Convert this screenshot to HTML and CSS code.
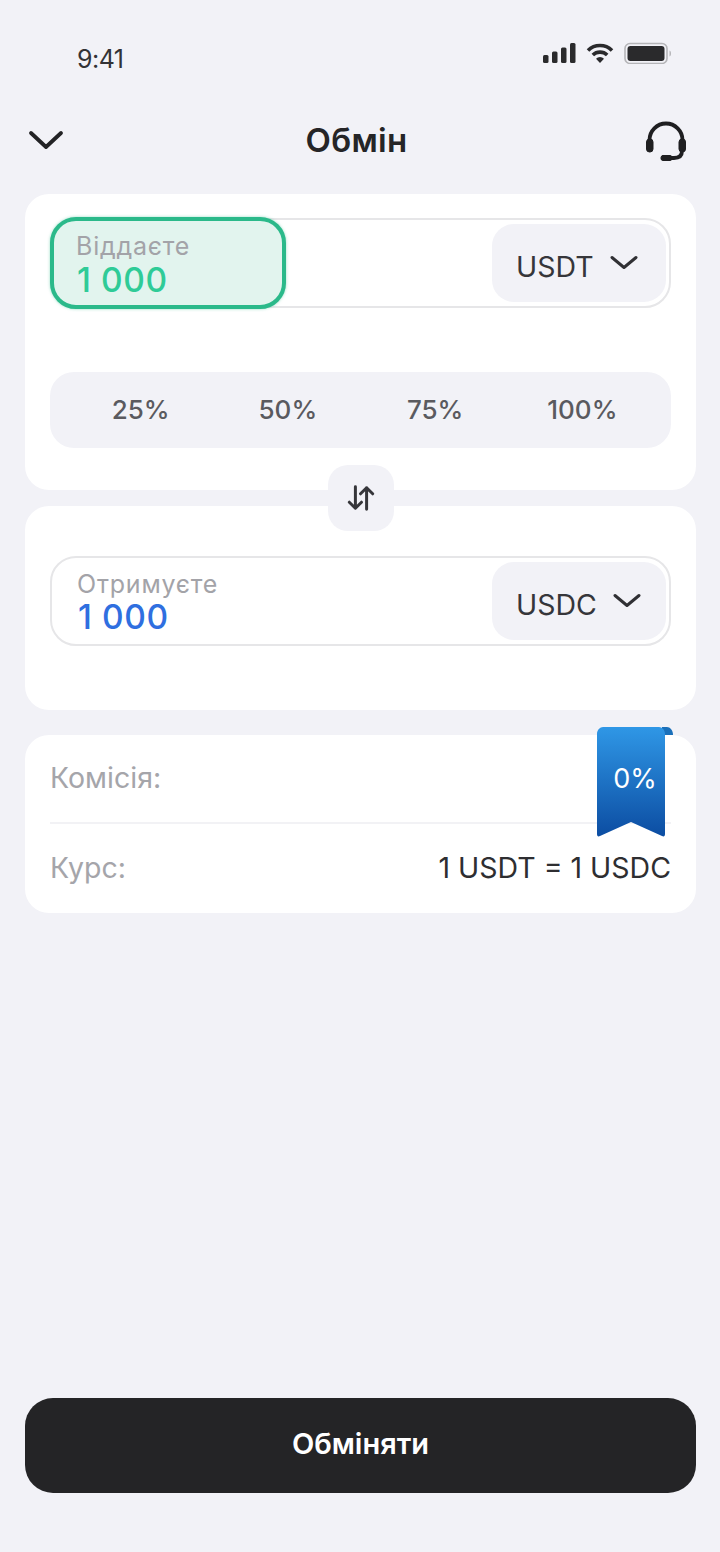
FILE: index.html
```html
<!DOCTYPE html>
<html lang="uk">
<head>
    <meta charset="UTF-8">
    <meta name="viewport" content="width=device-width, initial-scale=1.0">
    <title>Обмін</title>
    <link rel="stylesheet" href="styles.css">
</head>
<body>
    <div class="status-bar">
        <span class="status-time">9:41</span>
        <div class="status-icons">
            <svg width="34" height="22" viewBox="0 0 34 22"><rect x="1" y="13" width="5.5" height="8" rx="1.5"/><rect x="10" y="9.5" width="5.5" height="11.5" rx="1.5"/><rect x="19" y="5.5" width="5.5" height="15.5" rx="1.5"/><rect x="28" y="1" width="5.5" height="20" rx="1.5"/></svg>
            <svg width="28" height="22" viewBox="0 0 28 22" fill="none" stroke="#2a2a2c" stroke-width="3.6"><path d="M2 8.5a17 17 0 0 1 24 0"/><path d="M6.800 13a10.500 10.500 0 0 1 14.400 0"/><path d="M14 21l-4-4.200a5.600 5.600 0 0 1 8 0z" fill="#2a2a2c" stroke="none"/></svg>
            <svg width="49" height="22" viewBox="0 0 49 22"><rect x="1" y="1.500" width="42" height="20" rx="5" fill="none" stroke="#b5b5b8" stroke-width="1.600"/><rect x="3.500" y="4" width="37" height="15" rx="3" fill="#2a2a2c"/><path d="M45.500 8.500c2 .5 2 5.500 0 6z" fill="#b5b5b8"/></svg>
        </div>
    </div>

    <header class="top-bar">
        <svg class="back-icon" width="36" height="22" viewBox="0 0 36 22" fill="none" stroke="#232325" stroke-width="3.800" stroke-linecap="round" stroke-linejoin="round"><path d="M3 4l15 14L33 4"/></svg>
        <h1>Обмін</h1>
        <svg class="support-icon" width="42" height="42" viewBox="0 0 42 42" fill="none" stroke="#1f1f21" stroke-width="3.800" stroke-linecap="round"><path d="M4.500 23V19a16.500 16.500 0 0 1 33 0v4"/><rect x="1.500" y="18" width="6.500" height="13" rx="3" fill="#1f1f21" stroke-width="1"/><rect x="34" y="18" width="6.500" height="13" rx="3" fill="#1f1f21" stroke-width="1"/><path d="M37 30c0 5-3 7-8 7h-3"/><rect x="16" y="34.500" width="11" height="5" rx="2" fill="#1f1f21" stroke-width="1"/></svg>
    </header>

    <main class="content">
        <section class="card card-from">
            <div class="amount-field">
                <div class="amount-box amount-active">
                    <span class="amount-label">Віддаєте</span>
                    <span class="amount-value value-green">1 000</span>
                </div>
                <div class="currency-select">
                    <span>USDT</span>
                    <svg width="28" height="16" viewBox="0 0 28 16" fill="none" stroke="#303034" stroke-width="3" stroke-linecap="round" stroke-linejoin="round"><path d="M2 2.500l12 10 12-10"/></svg>
                </div>
            </div>
            <div class="percent-row">
                <span>25%</span>
                <span>50%</span>
                <span>75%</span>
                <span>100%</span>
            </div>
        </section>

        <div class="swap-btn">
            <svg width="28" height="28" viewBox="0 0 30 30" fill="none" stroke="#36363a" stroke-width="3.200" stroke-linecap="round" stroke-linejoin="round"><path d="M9 3v23M2.500 19.500L9 26l6.500-6.500"/><path d="M21 27V4M14.500 10.500L21 4l6.500 6.500"/></svg>
        </div>

        <section class="card card-to">
            <div class="amount-field">
                <div class="amount-box">
                    <span class="amount-label">Отримуєте</span>
                    <span class="amount-value value-blue">1 000</span>
                </div>
                <div class="currency-select">
                    <span>USDC</span>
                    <svg width="28" height="16" viewBox="0 0 28 16" fill="none" stroke="#303034" stroke-width="3" stroke-linecap="round" stroke-linejoin="round"><path d="M2 2.500l12 10 12-10"/></svg>
                </div>
            </div>
        </section>

        <section class="card card-info">
            <div class="info-row info-fee">
                <span class="info-label">Комісія:</span>
            </div>
            <div class="info-row info-rate">
                <span class="info-label">Курс:</span>
                <span class="info-value">1 USDT = 1 USDC</span>
            </div>
            <div class="ribbon">
                <svg width="78" height="111" viewBox="0 0 78 111">
                    <defs>
                        <linearGradient id="ribbon-fill" x1="0" y1="0" x2="0" y2="1">
                            <stop offset="0" stop-color="#2f97e6"/>
                            <stop offset="1" stop-color="#0c4da2"/>
                        </linearGradient>
                    </defs>
                    <path d="M66 1h5c3 0 6 3 6 8H66z" fill="#1a70ba"/>
                    <path d="M1 8c0-4 3-7 6-7h56c3 0 6 3 6 7v100c0 2-1 3-3 2l-31-14-31 14c-2 1-3 0-3-2z" fill="url(#ribbon-fill)"/>
                </svg>
                <span class="ribbon-text">0%</span>
            </div>
        </section>
    </main>

    <button type="button" class="exchange-btn">Обміняти</button>
</body>
</html>
```

FILE: styles.css
```css
body {
    margin: 0;
    height: 1552px;
    overflow: hidden;
    background-color: #f2f2f7;
    font-family: Inter, "Noto Sans", sans-serif;
    color: #252527;
    display: flex;
    flex-direction: column;
}
.status-bar {
    height: 88px;
    padding: 40px 47px 0 77px;
    box-sizing: border-box;
    display: flex;
    justify-content: space-between;
    align-items: flex-start;
}
.status-time {
    font-size: 25px;
    line-height: 38px;
    color: #333336;
    letter-spacing: -0.5px;
}
.status-icons {
    display: flex;
    align-items: center;
    gap: 10px;
    margin-top: 2px;
    fill: #2a2a2c;
}
.top-bar {
    height: 106px;
    padding: 0 33px 2px 28px;
    box-sizing: border-box;
    display: flex;
    justify-content: space-between;
    align-items: center;
}
.top-bar h1 {
    margin: 0 0 0 4px;
    font-size: 33px;
    font-weight: 600;
    letter-spacing: 0.3px;
    color: #252527;
}
.support-icon {
    margin-top: 4px;
}
.content {
    padding: 0 24px 0 25px;
    flex: 1;
}
.card {
    background-color: #fff;
    border-radius: 24px;
    padding: 24px 25px;
}
.card-from {
    height: 296px;
    box-sizing: border-box;
}
.card-to {
    height: 204px;
    box-sizing: border-box;
    padding-top: 50px;
}
.card-info {
    position: relative;
    margin-top: 25px;
    height: 178px;
    box-sizing: border-box;
    padding: 0 25px;
}
.amount-field {
    height: 90px;
    box-sizing: border-box;
    border: 2px solid #e6e6e8;
    border-radius: 26px;
    display: flex;
    justify-content: space-between;
    align-items: stretch;
}
.amount-box {
    width: 236px;
    box-sizing: border-box;
    padding: 11px 0 0 25px;
    display: flex;
    flex-direction: column;
}
.amount-active {
    margin: -3px 0 -3px -2px;
    border: 4px solid #2bb98a;
    border-radius: 26px;
    background-color: #e2f4ee;
    padding: 10px 0 0 22px;
    box-shadow: 0 0 3px rgba(43, 185, 138, 0.5);
}
.amount-active .amount-value {
    margin-top: 1px;
}
.amount-label {
    font-size: 25px;
    line-height: 30px;
    color: #a3a3a8;
    letter-spacing: 0.8px;
}
.amount-value {
    margin-left: 1px;
    font-size: 33.500px;
    line-height: 36px;
    font-weight: 500;
    letter-spacing: 0.6px;
}
.value-green {
    color: #2fcb97;
}
.value-blue {
    color: #2f6fe0;
}
.currency-select {
    width: 174px;
    margin: 4px 3px 4px 0;
    box-sizing: border-box;
    background-color: #f2f2f7;
    border-radius: 22px;
    padding: 6px 0 0 24px;
    display: flex;
    align-items: center;
    gap: 16px;
    font-size: 28.5px;
    color: #36363a;
}
.currency-select svg {
    margin-top: -6px;
}
.percent-row {
    margin-top: 64px;
    height: 76px;
    background-color: #f2f2f7;
    border-radius: 24px;
    display: grid;
    grid-template-columns: repeat(4, 1fr);
    padding: 0 15px 2px 17px;
    box-sizing: border-box;
    align-items: center;
    justify-items: center;
    font-size: 26px;
    font-weight: 500;
    color: #5a5a5f;
}
.swap-btn {
    width: 66px;
    height: 66px;
    margin: -25px auto -25px;
    position: relative;
    background-color: #f2f2f7;
    border-radius: 20px;
    display: flex;
    align-items: center;
    justify-content: center;
}
.info-row {
    height: 88px;
    display: flex;
    justify-content: space-between;
    align-items: center;
    font-size: 28.5px;
}
.info-fee {
    height: 89px;
    padding-bottom: 3px;
    box-sizing: border-box;
    border-bottom: 2px solid #f2f2f5;
}
.info-rate {
    padding-bottom: 2px;
    box-sizing: border-box;
}
.info-label {
    color: #a5a5aa;
}
.info-value {
    color: #2e2e31;
}
.ribbon {
    position: absolute;
    top: -9px;
    right: 22px;
    width: 78px;
    height: 111px;
}
.ribbon-text {
    position: absolute;
    left: 4px;
    top: 36px;
    width: 70px;
    text-align: center;
    font-size: 27px;
    line-height: 34px;
    color: #fff;
}
.exchange-btn {
    margin: 0 24px 59px 25px;
    height: 95px;
    padding: 0 0 5px;
    border: none;
    border-radius: 28px;
    background-color: #242426;
    color: #fff;
    font-family: inherit;
    font-size: 29px;
    font-weight: 600;
}
```
